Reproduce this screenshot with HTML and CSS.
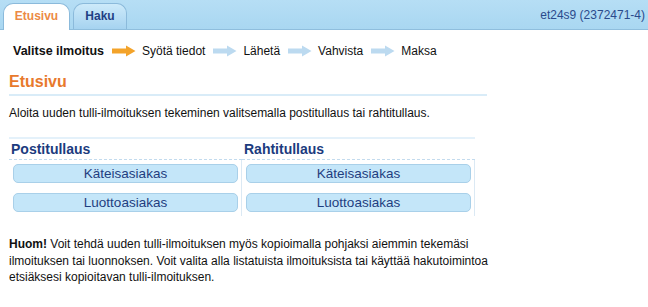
FILE: index.html
```html
<!DOCTYPE html>
<html lang="fi">
<head>
<meta charset="utf-8">
<title>Etusivu</title>
<link rel="stylesheet" href="styles.css">
</head>
<body>
<div class="topbar">
  <div class="tabs">
    <div class="tab tab-active">Etusivu</div>
    <div class="tab tab-other">Haku</div>
  </div>
  <div class="user">et24s9 (2372471-4)</div>
</div>

<div class="steps">
  <span class="step step-current">Valitse ilmoitus</span>
  <svg class="arrow" width="24" height="12" viewBox="0 0 24 12"><path d="M0 3.5 H14 V0.5 L23.5 6 L14 11.5 V8.5 H0 Z" fill="#f3a32a"/></svg>
  <span class="step">Syötä tiedot</span>
  <svg class="arrow" width="24" height="12" viewBox="0 0 24 12"><path d="M0 3.5 H14 V0.5 L23.5 6 L14 11.5 V8.5 H0 Z" fill="#bcdaf0"/></svg>
  <span class="step">Lähetä</span>
  <svg class="arrow" width="24" height="12" viewBox="0 0 24 12"><path d="M0 3.5 H14 V0.5 L23.5 6 L14 11.5 V8.5 H0 Z" fill="#bcdaf0"/></svg>
  <span class="step">Vahvista</span>
  <svg class="arrow" width="24" height="12" viewBox="0 0 24 12"><path d="M0 3.5 H14 V0.5 L23.5 6 L14 11.5 V8.5 H0 Z" fill="#bcdaf0"/></svg>
  <span class="step">Maksa</span>
</div>

<div class="content">
  <h1 class="page-title">Etusivu</h1>
  <p class="intro">Aloita uuden tulli-ilmoituksen tekeminen valitsemalla postitullaus tai rahtitullaus.</p>

  <div class="choices">
    <div class="col-head">Postitullaus</div>
    <div class="col-head">Rahtitullaus</div>
    <div class="col-body">
      <div class="btn">Käteisasiakas</div>
      <div class="btn">Luottoasiakas</div>
    </div>
    <div class="col-body">
      <div class="btn">Käteisasiakas</div>
      <div class="btn">Luottoasiakas</div>
    </div>
  </div>

  <p class="note"><b>Huom!</b> Voit tehdä uuden tulli-ilmoituksen myös kopioimalla pohjaksi aiemmin tekemäsi ilmoituksen tai luonnoksen. Voit valita alla listatuista ilmoituksista tai käyttää hakutoimintoa etsiäksesi kopioitavan tulli-ilmoituksen.</p>
</div>
</body>
</html>
```

FILE: styles.css
```css
body {
  margin: 0;
  font-family: "Liberation Sans", Arial, sans-serif;
  font-size: 12px;
  color: #111;
  background: #fff;
}

.topbar {
  height: 29px;
  background: linear-gradient(#b6def5, #a9d7f1);
  border-bottom: 1px solid #8fbedd;
  display: flex;
  align-items: flex-end;
  justify-content: space-between;
  padding: 0 3px;
}

.tabs {
  display: flex;
  gap: 3px;
  align-items: flex-end;
}

.tab {
  box-sizing: border-box;
  height: 26px;
  border: 1px solid #8bbadb;
  border-bottom: none;
  border-radius: 10px 10px 0 0;
  font-size: 12px;
  font-weight: bold;
  line-height: 25px;
  text-align: center;
}

.tab-active {
  width: 67px;
  height: 27px;
  margin-bottom: -1px;
  background: #fff;
  color: #ec8a45;
}

.tab-other {
  width: 54px;
  background: linear-gradient(#cdeafa, #a6d3f0);
  color: #1f3f84;
}

.user {
  align-self: center;
  color: #2a4a8c;
  font-size: 12px;
  margin-top: 1px;
}

.steps {
  display: flex;
  align-items: center;
  padding: 13px 0 0 13px;
  height: 16px;
  line-height: 16px;
  font-size: 12px;
}

.step-current {
  font-weight: bold;
  font-size: 12.5px;
}

.arrow {
  margin: 0 6px 0 8px;
}

.content {
  margin-left: 9px;
  width: 478px;
}

.page-title {
  margin: 13px 0 0;
  font-size: 16px;
  line-height: 20px;
  color: #e8792c;
  padding-bottom: 2px;
  border-bottom: 2px solid #d9ecf8;
}

.intro {
  margin: 9px 0 0;
  line-height: 16px;
}

.choices {
  margin-top: 16px;
  width: 466px;
  display: grid;
  grid-template-columns: 233px 233px;
  border-top: 2px solid #e4f1fa;
}

.col-head {
  padding: 1px 0 0 2px;
  height: 19px;
  line-height: 18px;
  font-size: 14px;
  font-weight: bold;
  color: #1c3b7e;
  border-bottom: 1px dashed #c3dbee;
}

.col-body {
  border-right: 1px solid #dbe9f4;
  padding: 4px 3px 4px 4px;
  display: flex;
  flex-direction: column;
  gap: 10px;
}

.btn {
  height: 17px;
  line-height: 17px;
  background: #c4e6f9;
  border: 1px solid #a9d0e9;
  border-radius: 5px;
  text-align: center;
  font-size: 13.5px;
  color: #1f3e80;
}

.note {
  margin: 20px 0 0;
  width: 500px;
  line-height: 16.5px;
}
```
